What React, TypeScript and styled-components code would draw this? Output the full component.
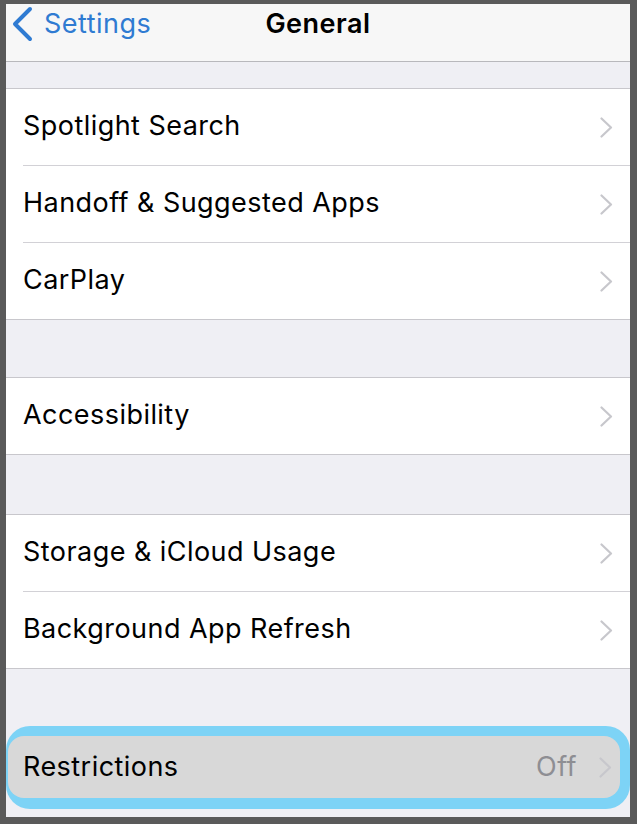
import React from "react";
import styled, { createGlobalStyle } from "styled-components";

const Global = createGlobalStyle`
  html, body { margin: 0; padding: 0; background: #5a5a5a; }
  body { font-family: Inter, Roboto, "Liberation Sans", Arial, sans-serif; }
`;

const Screen = styled.div`
  margin: 4px 7px 0 6px;
  width: 624px;
  height: 813px;
  background: #efeff4;
  display: flex;
  flex-direction: column;
  overflow: hidden;
`;

const NavBar = styled.div`
  height: 58px;
  flex-shrink: 0;
  background: #f7f7f7;
  border-bottom: 1px solid #b8b8bc;
  display: grid;
  grid-template-columns: 1fr auto 1fr;
  align-items: start;
  padding-top: 2px;
  box-sizing: border-box;
`;

const BackButton = styled.div`
  display: flex;
  align-items: center;
  gap: 10px;
  padding-left: 4px;
  color: #2f7bd2;
  font-size: 27px;
  letter-spacing: 0.5px;
  line-height: 36px;
`;

const Title = styled.div`
  font-size: 27px;
  letter-spacing: 0.5px;
  line-height: 36px;
  font-weight: 600;
  color: #000;
`;

const Gap = styled.div<{ $h: number }>`
  height: ${(p) => p.$h}px;
  flex-shrink: 0;
`;

const Group = styled.div`
  background: #fff;
  border-top: 1px solid #c8c7cc;
  border-bottom: 1px solid #c8c7cc;
  flex-shrink: 0;
`;

const Row = styled.div<{ $first?: boolean }>`
  height: 76px;
  box-sizing: border-box;
  margin-left: 17px;
  padding: 0 17px 3px 0;
  display: flex;
  align-items: center;
  border-top: ${(p) => (p.$first ? "none" : "1px solid #d2d1d6")};
  ${(p) => (p.$first ? "" : "height: 77px;")}
`;

const Label = styled.div`
  flex: 1;
  font-size: 27px;
  letter-spacing: 0.45px;
  color: #000;
`;

const Value = styled.div`
  font-size: 27px;
  letter-spacing: 0.45px;
  color: #8e8e93;
  margin-right: 22px;
`;

const Ring = styled.div`
  margin-top: 2px;
  background: #7dd3f6;
  border-radius: 24px;
  padding: 10px 10px 11px 2px;
  flex-shrink: 0;
`;

const SelectedRow = styled.div`
  height: 62px;
  box-sizing: border-box;
  padding: 0 8px 2px 15px;
  background: #d8d8d8;
  border-radius: 16px;
  display: flex;
  align-items: center;
`;

const ChevronIcon = styled.svg`
  flex-shrink: 0;
  margin-top: 3px;
`;

const Chevron = () => (
  <ChevronIcon width="13" height="21" viewBox="0 0 13 21" fill="none">
    <path d="M1.5 1.5 L11 10.5 L1.5 19.5" stroke="#c7c7cc" strokeWidth="2.2" strokeLinecap="round" strokeLinejoin="round" />
  </ChevronIcon>
);

const BackChevron = () => (
  <svg width="24" height="36" viewBox="0 0 24 36" fill="none">
    <path d="M20 3 L5 18 L20 33" stroke="#2f7bd2" strokeWidth="4" strokeLinecap="round" strokeLinejoin="round" />
  </svg>
);

const Item = ({ label, first }: { label: string; first?: boolean }) => (
  <Row $first={first}>
    <Label>{label}</Label>
    <Chevron />
  </Row>
);

export default function App() {
  return (
    <>
      <Global />
      <Screen>
        <NavBar>
          <BackButton>
            <BackChevron />
            <span>Settings</span>
          </BackButton>
          <Title>General</Title>
          <div />
        </NavBar>
        <Gap $h={26} />
        <Group>
          <Item label="Spotlight Search" first />
          <Item label="Handoff & Suggested Apps" />
          <Item label="CarPlay" />
        </Group>
        <Gap $h={57} />
        <Group>
          <Item label="Accessibility" first />
        </Group>
        <Gap $h={59} />
        <Group>
          <Item label="Storage & iCloud Usage" first />
          <Item label="Background App Refresh" />
        </Group>
        <Gap $h={55} />
        <Ring>
          <SelectedRow>
            <Label>Restrictions</Label>
            <Value>Off</Value>
            <Chevron />
          </SelectedRow>
        </Ring>
      </Screen>
    </>
  );
}
